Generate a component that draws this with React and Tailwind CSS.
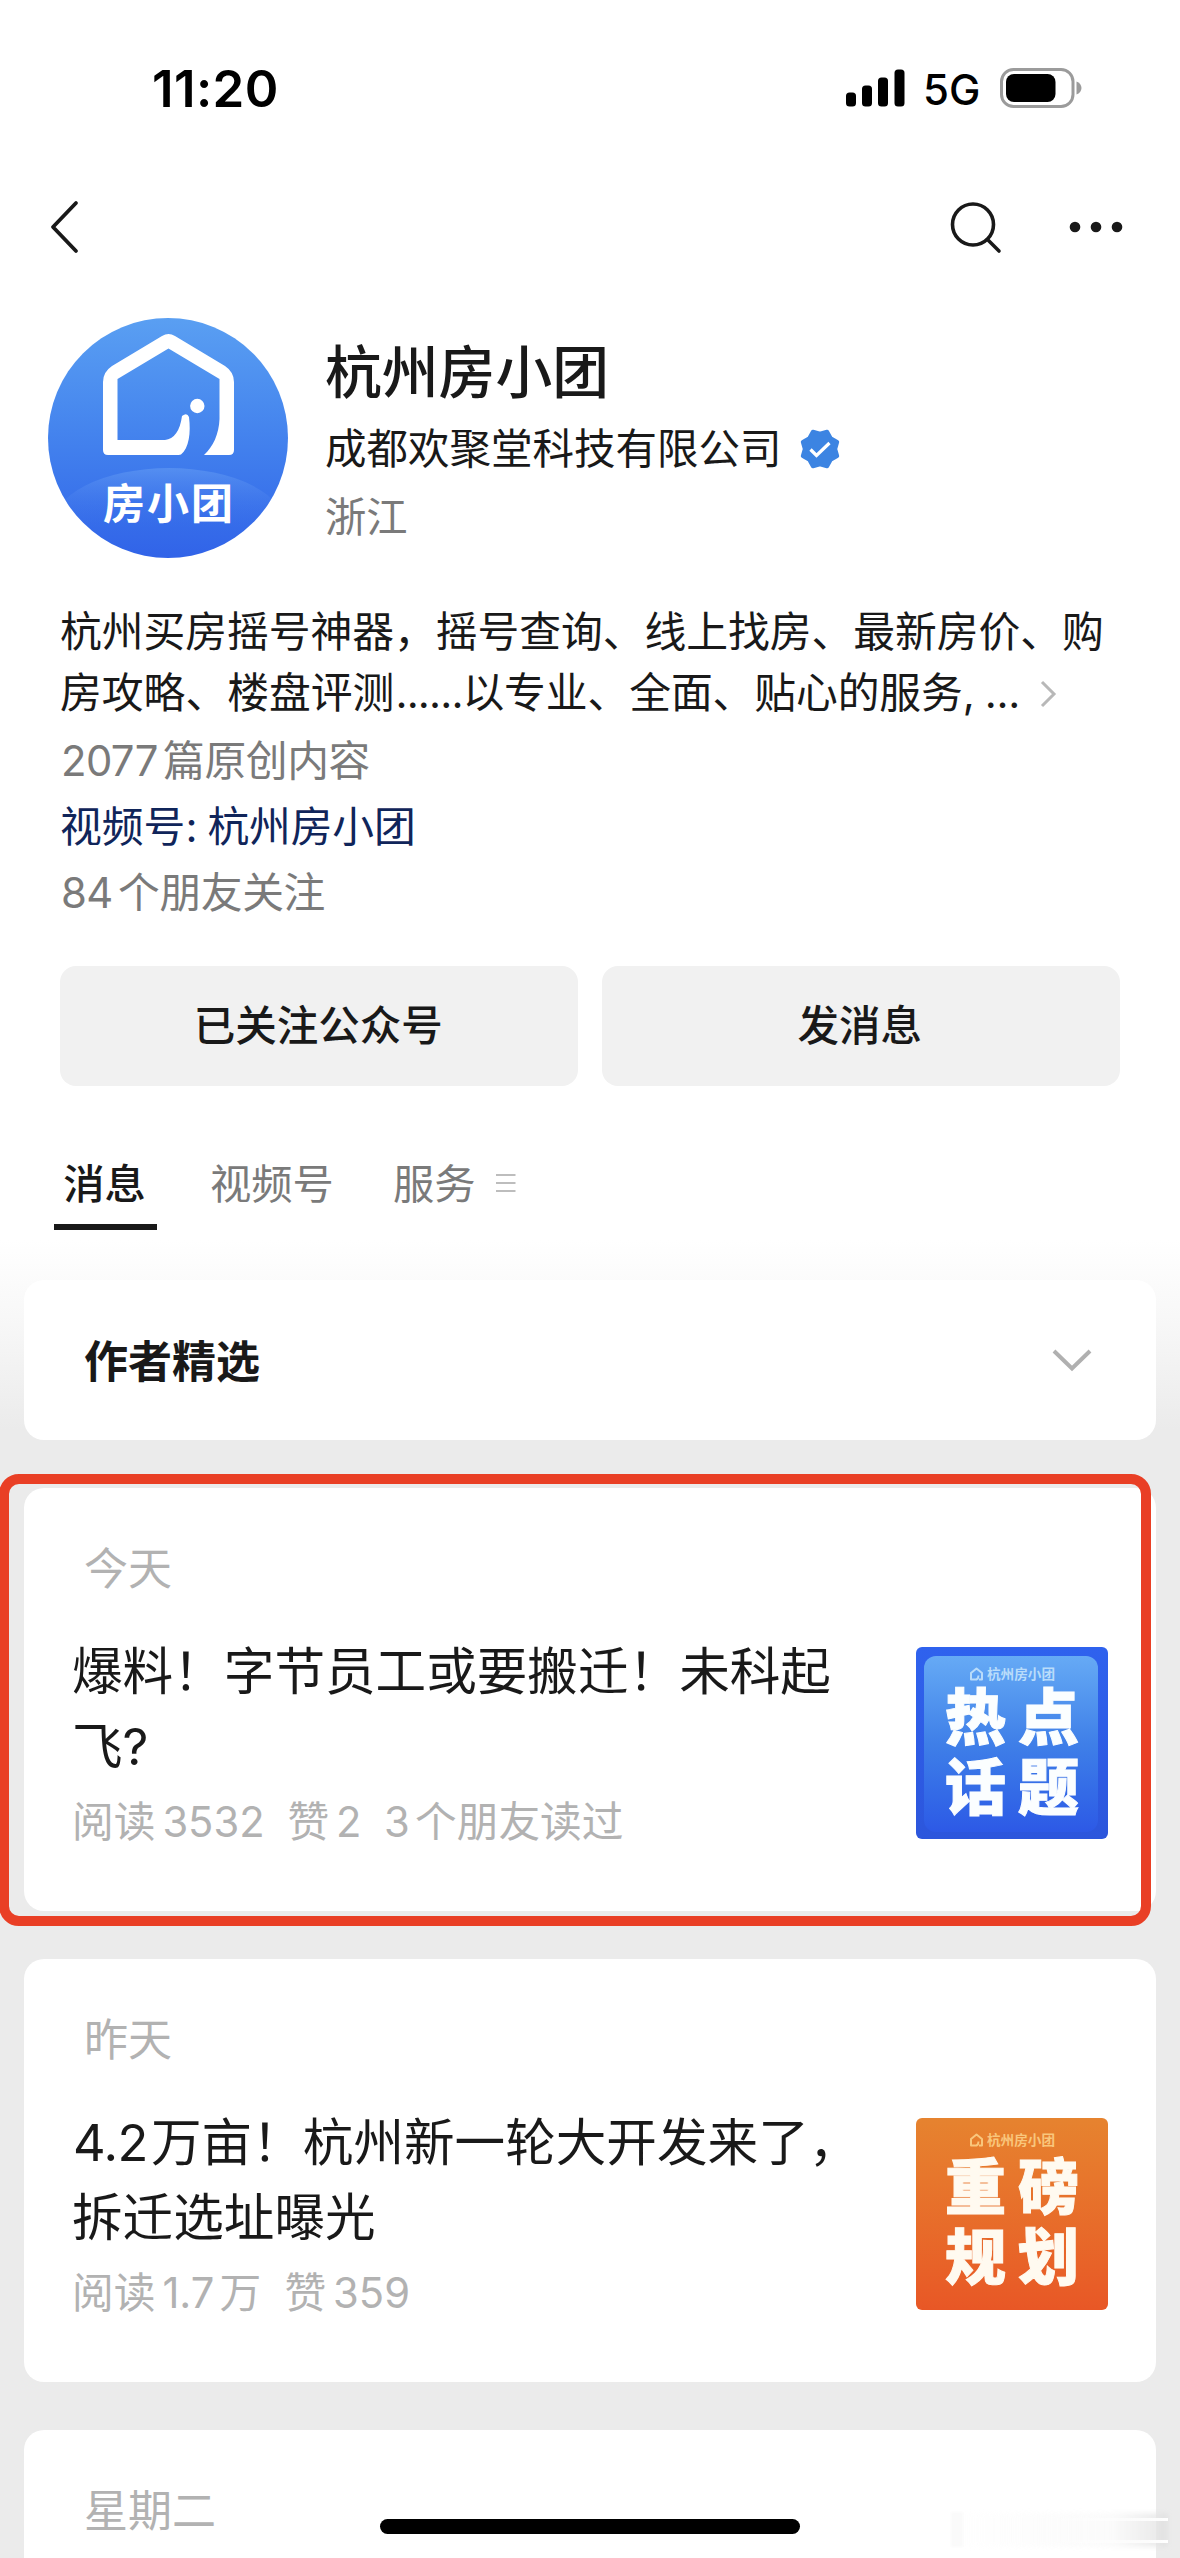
const FONT = "font-['Inter','Noto_Sans_CJK_SC',sans-serif]";

function StatusBar() {
  return (
    <div className="flex h-[178px] items-start pt-[58px] pl-[152px] text-black">
      <div className="h-[60px] w-[694px] text-[51px] leading-[61px] font-semibold tracking-[0.400px]">11:20</div>
      <svg className="mt-[11px] h-[38px] w-[60px] shrink-0" viewBox="0 0 60 38">
        <rect x="0" y="23.5" width="10" height="14" rx="3.5" />
        <rect x="16" y="16.5" width="10" height="21" rx="3.5" />
        <rect x="32" y="8.5" width="10" height="29" rx="3.5" />
        <rect x="48.500" y="0.500" width="10" height="37" rx="3.5" />
      </svg>
      <div className="ml-[17px] h-[60px] w-[77px] text-[42px] leading-[63px] font-medium">5G</div>
      <svg className="mt-[10px] h-[40px] w-[83px] shrink-0" viewBox="0 0 83 40">
        <rect x="1.500" y="1.500" width="71.500" height="37" rx="12" fill="none" stroke="#9b9b9b" strokeWidth="3" />
        <rect x="6" y="6" width="49.500" height="28" rx="8" />
        <path d="M76.500 13.500c3 1.200 5 3.500 5 6.500s-2 5.300-5 6.500z" fill="#9b9b9b" />
      </svg>
    </div>
  );
}

function NavBar() {
  return (
    <div className="flex h-[100px] items-center justify-between pr-[57px] pl-[49px] text-[#191919]">
      <svg className="mb-[2px] h-[56px] w-[32px]" viewBox="0 0 32 56" fill="none" stroke="currentColor" strokeWidth="3.800" strokeLinecap="round" strokeLinejoin="round">
        <path d="M27 4 4 28 27 52" />
      </svg>
      <div className="mb-[2px] flex items-center gap-[67px]">
        <svg className="h-[54px] w-[54px]" viewBox="0 0 54 54" fill="none" stroke="currentColor" strokeWidth="3.600" strokeLinecap="round">
          <circle cx="25" cy="24.500" r="20.500" />
          <path d="M39.500 39.500 51 51" />
        </svg>
        <svg className="h-[12px] w-[54px]" viewBox="0 0 54 12" fill="currentColor">
          <circle cx="6" cy="6" r="5.300" />
          <circle cx="27" cy="6" r="5.300" />
          <circle cx="48" cy="6" r="5.300" />
        </svg>
      </div>
    </div>
  );
}

function Avatar() {
  return (
    <div className="relative h-[240px] w-[240px] shrink-0 overflow-hidden rounded-full bg-linear-to-b from-[#5a9ff2] to-[#3163e8]">
      <svg className="absolute inset-0 h-full w-full" viewBox="0 0 240 240">
        <defs>
          <linearGradient id="hill" x1="0" y1="0" x2="0" y2="1">
            <stop offset="0" stopColor="#5c95f2" stopOpacity="0.75" />
            <stop offset="0.500" stopColor="#3a6eea" stopOpacity="0" />
          </linearGradient>
        </defs>
        <ellipse cx="121" cy="210" rx="118" ry="60" fill="url(#hill)" />
        <g fill="#fff">
          <path
            fillRule="evenodd"
            d="M114 18 Q120.500 14 127 18 L177 48 Q186 54 186 64 V132 Q186 137 181 137 H156 C165 129 171 116 171.500 101 V61 L120.500 30.500 L69.500 61 V122 H117 C126 121 132 113 134 98 Q139 94 141 99 C143 115 141 130 133 136.500 Q131 137 128 137 H60 Q55 137 55 132 V64 Q55 54 64 48 Z"
          />
          <circle cx="149.300" cy="88" r="7.200" />
        </g>
      </svg>
      <div className="absolute top-[160px] left-[1px] w-full text-center text-[42px] leading-[52px] font-bold tracking-[2px] text-white">房小团</div>
    </div>
  );
}

function VerifiedBadge() {
  return (
    <svg className="ml-[17px] h-[42px] w-[42px]" viewBox="-21 -21 42 42">
      <path
        d="M7.100 -17.200 10.700 -10.700 17.200 -7.100 15.200 0 17.200 7.100 10.700 10.700 7.100 17.200 0 15.200 -7.100 17.200 -10.700 10.700 -17.200 7.100 -15.200 0 -17.200 -7.100 -10.700 -10.700 -7.100 -17.200 0 -15.200z"
        fill="#3c84e2"
        stroke="#3c84e2"
        strokeWidth="4"
        strokeLinejoin="round"
      />
      <path d="M-9.500 0.500 -3.500 6.500 9.500 -6" fill="none" stroke="#fff" strokeWidth="3.200" />
    </svg>
  );
}

function Profile() {
  return (
    <div className="flex h-[290px] pt-[40px] pl-[48px]">
      <Avatar />
      <div className="ml-[37px] text-[#191919]">
        <div className="mt-[20px] h-[70px] text-[56.800px] leading-[70px] font-medium">杭州房小团</div>
        <div className="mt-[16px] flex h-[50px] items-center text-[41.500px] leading-[50px]">
          成都欢聚堂科技有限公司
          <VerifiedBadge />
        </div>
        <div className="mt-[18px] text-[41.300px] leading-[50px] text-[#7a7a7a]">浙江</div>
      </div>
    </div>
  );
}

function About() {
  return (
    <div className="h-[398px] pt-[33px] pl-[60px] text-[41.800px] text-[#191919]">
      <div className="h-[61px] leading-[62px] tracking-[-0.050px] whitespace-nowrap">杭州买房摇号神器，摇号查询、线上找房、最新房价、购</div>
      <div className="flex h-[62px] items-center leading-[62px] whitespace-nowrap">
        <span>房攻略、楼盘评测</span>
        <span className="w-[68px] pl-[1px] tracking-[-0.800px]">......</span>
        <span className="tracking-[-0.100px]">以专业、全面、贴心的服务</span>
        <span className="w-[22px]">,</span>
        <span className="w-[54px] tracking-[-0.300px]">...</span>
        <svg className="mt-[2px] h-[28px] w-[18px]" viewBox="0 0 18 28" fill="none" stroke="#b8b8b8" strokeWidth="3">
          <path d="M3 2 15 14 3 26" />
        </svg>
      </div>
      <div className="mt-[6px] flex h-[62px] leading-[62px] text-[#7a7a7a]">
        <span className="w-[103px] pl-[1px] tracking-[-0.600px]">2077</span>
        <span className="tracking-[-0.400px]">篇原创内容</span>
      </div>
      <div className="mt-[4px] flex h-[62px] leading-[62px] text-[#10255a]">
        <span>视频号</span>
        <span className="w-[22px]">:</span>
        <span className="tracking-[-0.150px]">杭州房小团</span>
      </div>
      <div className="mt-[4px] flex h-[62px] leading-[62px] text-[#7a7a7a]">
        <span className="w-[58px] pl-[1px] tracking-[-0.600px]">84</span>
        <span className="tracking-[-0.400px]">个朋友关注</span>
      </div>
    </div>
  );
}

function Actions() {
  return (
    <div className="flex gap-[24px] px-[60px] text-[41.500px] font-medium text-[#191919]">
      <button className="h-[120px] flex-1 rounded-[16px] bg-[#f1f1f1] pt-[1px] pr-[1px]">已关注公众号</button>
      <button className="h-[120px] flex-1 rounded-[16px] bg-[#f1f1f1] pt-[1px] pr-[2px]">发消息</button>
    </div>
  );
}

function Tabs() {
  return (
    <div className="flex h-[194px] pt-[68px] pl-[54px] text-[41.300px] leading-[60px] text-[#7a7a7a]">
      <div className="h-[76px] w-[103px] border-b-[6px] border-[#191919] pr-[2px] text-center font-medium text-[#191919]">消息</div>
      <div className="ml-[53px]">视频号</div>
      <div className="ml-[59px]">服务</div>
      <svg className="mt-[19px] ml-[20px] h-[20px] w-[20px]" viewBox="0 0 20 20" stroke="#bdbdbd" strokeWidth="2">
        <path d="M0 2H19.500M0 10H19.500M0 18H19.500" />
      </svg>
    </div>
  );
}

function MiniHouse() {
  return (
    <svg className="mr-[3px] h-[14px] w-[15px]" viewBox="0 0 15 14" fill="none" stroke="currentColor" strokeWidth="2" strokeLinejoin="round">
      <path d="M10 12.500h3V6L7.500 1.500 2 6v6.500h5.500q2-1 2-4" />
    </svg>
  );
}

function Thumb({ top, bottom, hot }) {
  return (
    <div className={hot ? "relative h-[192px] w-[192px] overflow-hidden rounded-[6px] bg-linear-to-b from-[#2f62ee] to-[#2c56dc]" : "relative h-[192px] w-[192px] overflow-hidden rounded-[6px] bg-linear-to-b from-[#e6832f] to-[#e85726]"}>
      {hot && <div className="absolute top-[9px] left-[8px] h-[176px] w-[174px] rounded-[12px] bg-linear-to-b from-[#66aaf5] via-[#3f7fe8] via-50% to-[#2d59e6]" />}
      <div className={hot ? "relative mt-[18px] flex h-[18px] items-center justify-center text-[13.600px] leading-[18px] font-bold text-[#b9dcfa]" : "relative mt-[13px] flex h-[18px] items-center justify-center text-[13.600px] leading-[18px] font-bold text-[#f9c67c]"}>
        <MiniHouse />杭州房小团
      </div>
      <div className={hot ? "relative pl-[29px] text-[61px] leading-[70px] font-black tracking-[12px] whitespace-nowrap text-[#fbfeff] [-webkit-text-stroke:1px_#fbfeff]" : "relative mt-[4px] pl-[29px] text-[61px] leading-[70px] font-black tracking-[12px] whitespace-nowrap text-[#fffaf0] [-webkit-text-stroke:1px_#fffaf0]"}>
        <div>{top}</div>
        <div>{bottom}</div>
      </div>
    </div>
  );
}

function Card({ day, lines, meta, thumb }) {
  return (
    <div className="h-[423px] rounded-[20px] bg-white">
      <div className="h-[146px] pt-[51px] pl-[60px] text-[44px] leading-[60px] text-[#b2b2b2]">{day}</div>
      {lines && (
        <div className="flex">
          <div className="w-[843px] pl-[48px]">
            <div className="h-[150px] text-[50.600px] leading-[75px] whitespace-nowrap text-[#191919]">{lines}</div>
            <div className="mt-[8px] flex h-[60px] text-[41.700px] leading-[60px] whitespace-nowrap text-[#b2b2b2]">{meta}</div>
          </div>
          <div className="mt-[13px] ml-[49px]">{thumb}</div>
        </div>
      )}
    </div>
  );
}

export default function App() {
  return (
    <div className={`relative h-[2558px] w-[1180px] overflow-hidden bg-[#ebebeb] ${FONT}`}>
      <div className="h-[1280px] bg-white">
        <StatusBar />
        <NavBar />
        <Profile />
        <About />
        <Actions />
        <Tabs />
      </div>
      <div className="-mt-[40px] h-[190px] bg-linear-to-b from-white via-[#f8f8f8] via-40% to-[#ebebeb] px-[24px] pt-[40px]">
        <div className="flex h-[160px] items-center justify-between rounded-[20px] bg-white pr-[64px] pl-[60px]">
          <div className="pt-[3px] text-[44px] leading-[60px] font-bold text-[#191919]">作者精选</div>
          <svg className="h-[24px] w-[40px]" viewBox="0 0 40 24" fill="none" stroke="#b0b0b0" strokeWidth="4">
            <path d="M2 3 20 20.500 38 3" />
          </svg>
        </div>
      </div>
      <div className="mt-[58px] flex flex-col gap-[48px] px-[24px]">
        <Card
          day="今天"
          lines={<><div>爆料！字节员工或要搬迁！未科起</div><div>飞?</div></>}
          meta={
            <>
              <span>阅读</span>
              <span className="w-[132px] pl-[7px]">3532</span>
              <span>赞</span>
              <span className="w-[55px] pl-[7px]">2</span>
              <span className="w-[31px]">3</span>
              <span>个朋友读过</span>
            </>
          }
          thumb={<Thumb hot top="热点" bottom="话题" />}
        />
        <Card
          day="昨天"
          lines={
            <>
              <div className="flex"><span className="w-[79px] pl-[1px] tracking-[-0.500px]">4.2</span><span>万亩！杭州新一轮大开发来了，</span></div>
              <div>拆迁选址曝光</div>
            </>
          }
          meta={
            <>
              <span>阅读</span>
              <span className="w-[64px] pl-[7px]">1.7</span>
              <span className="w-[65px]">万</span>
              <span>赞</span>
              <span className="pl-[7px]">359</span>
            </>
          }
          thumb={<Thumb top="重磅" bottom="规划" />}
        />
        <Card day="星期二" />
      </div>
      <div className="absolute top-[1474px] left-[-1px] h-[452px] w-[1152px] rounded-[20px] border-[10.500px] border-[#e93f25]" />
      <div className="absolute top-[2519px] left-[380px] h-[15px] w-[420px] rounded-full bg-black" />
      <div className="absolute top-[2513px] left-[951px] h-[34px] w-[217px] bg-linear-to-r from-transparent via-[#f9f9f9] via-75% to-[#dedede] opacity-70 blur-[2px]" />
      <div className="absolute top-[2518px] left-[1040px] h-[3px] w-[128px] bg-linear-to-r from-transparent to-white" />
      <div className="absolute top-[2540px] left-[1040px] h-[3px] w-[128px] bg-linear-to-r from-transparent to-white" />
      <div className="absolute top-[2512px] left-[951px] h-[35px] w-[12px] bg-[#fafafa] blur-[1px]" />
    </div>
  );
}
